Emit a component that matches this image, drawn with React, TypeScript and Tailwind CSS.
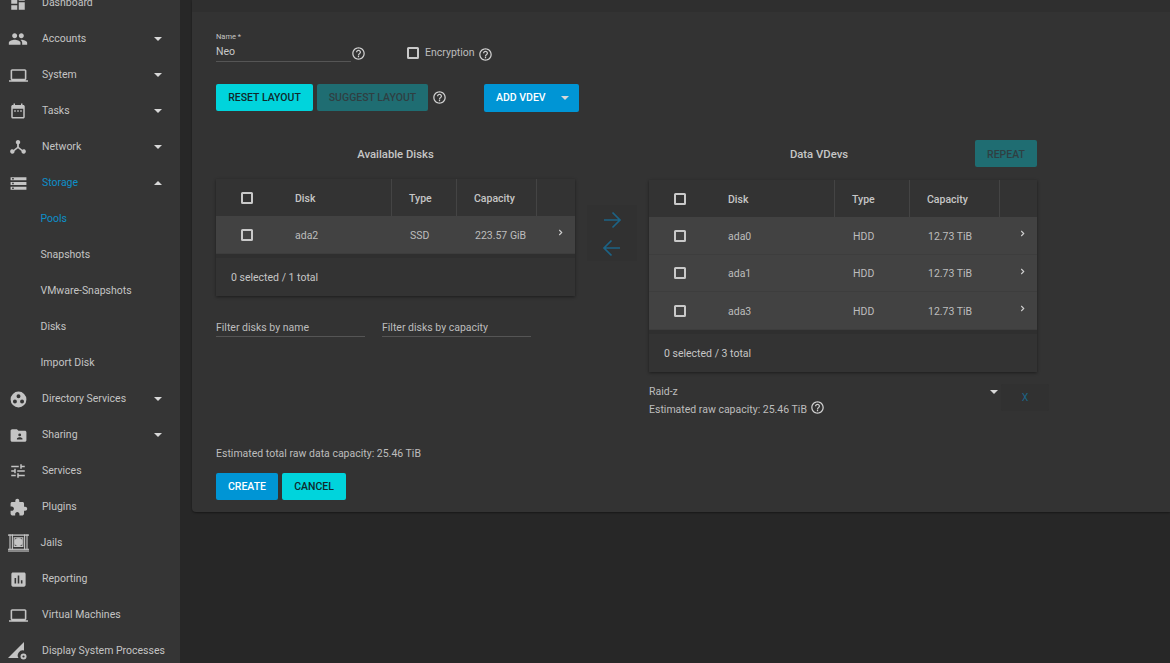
import React from "react";

const P = {
  dashboard: "M3 13h8V3H3v10zm0 8h8v-6H3v6zm10 0h8V11h-8v10zm0-18v6h8V3h-8z",
  people: "M16 11c1.66 0 2.99-1.34 2.99-3S17.66 5 16 5c-1.66 0-3 1.34-3 3s1.34 3 3 3zm-8 0c1.66 0 2.99-1.34 2.99-3S9.66 5 8 5C6.34 5 5 6.34 5 8s1.34 3 3 3zm0 2c-2.33 0-7 1.17-7 3.5V19h14v-2.5c0-2.33-4.67-3.5-7-3.5zm8 0c-.29 0-.62.02-.97.05 1.16.84 1.97 1.97 1.97 3.45V19h6v-2.5c0-2.33-4.67-3.5-7-3.5z",
  laptop: "M20 18c1.1 0 1.99-.9 1.99-2L22 6c0-1.1-.9-2-2-2H4c-1.1 0-2 .9-2 2v10c0 1.1.9 2 2 2H0v2h24v-2h-4zM4 6h16v10H4V6z",
  calendar: "M19 4h-1V2h-2v2H8V2H6v2H5c-1.11 0-1.99.9-1.99 2L3 20a2 2 0 0 0 2 2h14c1.1 0 2-.9 2-2V6c0-1.1-.9-2-2-2zm0 16H5V9h14v11zM7 11h2v2H7zm4 0h2v2h-2zm4 0h2v2h-2z",
  network: "M12 2.500a3 3 0 0 1 1.200 5.750V12l4.600 3.500a3 3 0 1 1-1.200 1.700L12 13.700l-4.600 3.500a3 3 0 1 1-1.200-1.700l4.600-3.500V8.250A3 3 0 0 1 12 2.500z",
  storage: "M2 20h20v-4H2v4zm2-3h2v2H4v-2zM2 4v4h20V4H2zm4 3H4V5h2v2zm-4 7h20v-4H2v4zm2-3h2v2H4v-2z",
  circles: "M12 2a10 10 0 1 0 0 20 10 10 0 0 0 0-20zm0 3.500a2.500 2.500 0 1 1 0 5 2.500 2.500 0 0 1 0-5zM7.500 12a2.500 2.500 0 1 1 0 5 2.500 2.500 0 0 1 0-5zm9 0a2.500 2.500 0 1 1 0 5 2.500 2.500 0 0 1 0-5z",
  folder: "M20 6h-8l-2-2H4c-1.100 0-1.990.900-1.990 2L2 18c0 1.100.900 2 2 2h16c1.100 0 2-.900 2-2V8c0-1.100-.900-2-2-2zm-6.500 3.500a1.800 1.800 0 1 1 0 3.600 1.800 1.800 0 0 1 0-3.600zM17 17h-7v-1c0-1.200 2.300-1.900 3.500-1.900S17 14.800 17 16v1z",
  tune: "M3 17v2h6v-2H3zM3 5v2h10V5H3zm10 16v-2h8v-2h-8v-2h-2v6h2zM7 9v2H3v2h4v2h2V9H7zm14 4v-2H11v2h10zm-6-4h2V7h4V5h-4V3h-2v6z",
  extension: "M20.5 11H19V7c0-1.1-.9-2-2-2h-4V3.5C13 2.12 11.88 1 10.5 1S8 2.12 8 3.5V5H4c-1.1 0-1.99.9-1.99 2v3.8H3.5c1.49 0 2.7 1.21 2.7 2.7s-1.21 2.7-2.7 2.7H2V20c0 1.1.9 2 2 2h3.8v-1.5c0-1.49 1.21-2.7 2.7-2.7 1.49 0 2.7 1.21 2.7 2.7V22H17c1.1 0 2-.9 2-2v-4h1.5c1.38 0 2.5-1.12 2.5-2.5S21.88 11 20.5 11z",
  report: "M19 3H5c-1.1 0-2 .9-2 2v14c0 1.1.9 2 2 2h14c1.1 0 2-.9 2-2V5c0-1.1-.9-2-2-2zM9 17H7v-7h2v7zm4 0h-2V7h2v10zm4 0h-2v-4h2v4z",
  help: "M11 18h2v-2h-2v2zm1-16C6.48 2 2 6.48 2 12s4.48 10 10 10 10-4.48 10-10S17.52 2 12 2zm0 18c-4.41 0-8-3.59-8-8s3.59-8 8-8 8 3.59 8 8-3.59 8-8 8zm0-14c-2.21 0-4 1.79-4 4h2c0-1.1.9-2 2-2s2 .9 2 2c0 2-3 1.75-3 5h2c0-2.25 3-2.5 3-5 0-2.21-1.79-4-4-4z",
};

function Ic({ d, cls }: { d: string; cls: string }) {
  return (
    <svg viewBox="0 0 24 24" fill="currentColor" fillRule="evenodd" className={cls}>
      <path d={d} />
    </svg>
  );
}

function Jails() {
  return (
    <svg viewBox="0 0 22 18" className="w-[21px] h-[18px]" fill="#c4c4c4">
      <rect x="0" y="0" width="22" height="1.4" />
      <rect x="0" y="15" width="22" height="1.2" />
      <rect x="0" y="16.800" width="22" height="1.2" />
      <rect x="1.500" y="0" width="1.200" height="16" />
      <rect x="4" y="0" width="1.200" height="16" />
      <rect x="16.800" y="0" width="1.200" height="16" />
      <rect x="19.300" y="0" width="1.200" height="16" />
      <circle cx="11" cy="8" r="4.300" />
      <path d="M6.500 3.500 L15.500 3.500 L15.500 12.500 L6.500 12.500 Z" fill="none" stroke="#c4c4c4" strokeWidth="1.200" />
    </svg>
  );
}

function Procs() {
  return (
    <svg viewBox="0 0 20 20" className="w-[20px] h-[20px]" fill="#c4c4c4">
      <path d="M0 17 L16 1 L16 9.500 A5 5 0 0 0 10.500 17 Z" />
      <circle cx="15.500" cy="15.500" r="3" />
      <circle cx="15.500" cy="15.500" r="1.100" fill="#353535" />
    </svg>
  );
}

function Caret({ up }: { up?: boolean }) {
  return (
    <span
      className={
        up
          ? "w-0 h-0 border-x-[4px] border-x-transparent border-b-[4px] border-b-[#d8d8d8]"
          : "w-0 h-0 border-x-[4px] border-x-transparent border-t-[4px] border-t-[#d8d8d8]"
      }
    />
  );
}

const NAV: { label: string; icon?: React.ReactNode; caret?: "up" | "down"; sub?: boolean; active?: boolean }[] = [
  { label: "Dashboard", icon: <Ic d={P.dashboard} cls="w-[18px] h-[18px]" /> },
  { label: "Accounts", icon: <Ic d={P.people} cls="w-[20px] h-[20px]" />, caret: "down" },
  { label: "System", icon: <Ic d={P.laptop} cls="w-[19px] h-[19px]" />, caret: "down" },
  { label: "Tasks", icon: <Ic d={P.calendar} cls="w-[18px] h-[18px]" />, caret: "down" },
  { label: "Network", icon: <Ic d={P.network} cls="w-[18px] h-[18px]" />, caret: "down" },
  { label: "Storage", icon: <Ic d={P.storage} cls="w-[19px] h-[19px]" />, caret: "up", active: true },
  { label: "Pools", sub: true, active: true },
  { label: "Snapshots", sub: true },
  { label: "VMware-Snapshots", sub: true },
  { label: "Disks", sub: true },
  { label: "Import Disk", sub: true },
  { label: "Directory Services", icon: <Ic d={P.circles} cls="w-[19px] h-[19px]" />, caret: "down" },
  { label: "Sharing", icon: <Ic d={P.folder} cls="w-[19px] h-[19px]" />, caret: "down" },
  { label: "Services", icon: <Ic d={P.tune} cls="w-[18px] h-[18px]" /> },
  { label: "Plugins", icon: <Ic d={P.extension} cls="w-[19px] h-[19px]" /> },
  { label: "Jails", icon: <Jails /> },
  { label: "Reporting", icon: <Ic d={P.report} cls="w-[19px] h-[19px]" /> },
  { label: "Virtual Machines", icon: <Ic d={P.laptop} cls="w-[19px] h-[19px]" /> },
  { label: "Display System Processes", icon: <Procs /> },
];

function Sidebar() {
  return (
    <nav className="w-[180px] shrink-0 bg-[#353535] -mt-[15px] text-[10.500px]">
      {NAV.map((n) => (
        <div key={n.label} className="h-9 flex items-center relative">
          {n.sub ? (
            <span className={n.active ? "pl-[40.500px] text-[#0d8fc9]" : "pl-[40.500px] text-[#c4c4c4]"}>{n.label}</span>
          ) : (
            <>
              <span className="w-[36px] flex justify-center text-[#c4c4c4] shrink-0">{n.icon}</span>
              <span className={n.active ? "ml-[6px] text-[#0d8fc9]" : n.label === "Jails" ? "ml-[4.500px] text-[#c4c4c4]" : "ml-[6px] text-[#c4c4c4]"}>
                {n.label}
              </span>
            </>
          )}
          {n.caret && (
            <span className="absolute left-[154px] top-1/2 -translate-y-1/2 flex">
              <Caret up={n.caret === "up"} />
            </span>
          )}
        </div>
      ))}
    </nav>
  );
}

function Help({ cls = "" }: { cls?: string }) {
  return <Ic d={P.help} cls={"w-[15px] h-[15px] text-[#d0d0d0] shrink-0 " + cls} />;
}

function Check() {
  return <span className="block w-3 h-3 border-2 border-[#c9c9c9] rounded-[1.500px] box-border" />;
}

function Chevron() {
  return (
    <svg viewBox="0 0 6 8" className="w-[5px] h-[7px]" fill="none" stroke="#d0d0d0" strokeWidth="1.300">
      <path d="M1.500 1 L4.500 4 L1.500 7" />
    </svg>
  );
}

type Cols = { c: string; d: string; t: string; cap: string; a: string };

function DiskTable({ rows, footer, cols, rowH }: { rows: { name: string; type: string; cap: string }[]; footer: string; cols: Cols; rowH: string[] }) {
  return (
    <div className="shadow-[0_1px_3px_rgba(0,0,0,0.45)] text-[10.500px]">
      <div className="h-[37px] flex items-center text-[#c6c6c6] font-medium bg-[#333333]">
        <div className={cols.c + " flex justify-center"}><Check /></div>
        <div className={cols.d + " h-full flex items-center border-r border-[#444444] pt-[2px]"}>Disk</div>
        <div className={cols.t + " h-full flex items-center border-r border-[#444444] pl-[17px] pt-[2px]"}>Type</div>
        <div className={cols.cap + " h-full flex items-center border-r border-[#444444] pl-[17px] pt-[2px]"}>Capacity</div>
      </div>
      {rows.map((r, i) => (
        <div key={r.name} className={rowH[i] + " flex items-center bg-[#424242] text-[#bdbdbd] relative border-b border-[#3d3d3d]"}>
          <div className={cols.c + " flex justify-center"}><Check /></div>
          <div className={cols.d + " pl-[1px] pt-[2px]"}>{r.name}</div>
          <div className={cols.t + " pl-[18px] pt-[2px]"}>{r.type}</div>
          <div className={cols.cap + " pl-[18px] pt-[2px]"}>{r.cap}</div>
          <div className={cols.a + " flex -mt-1"}><Chevron /></div>
        </div>
      ))}
      <div className="h-1 bg-[#2f2f2f]" />
      <div className="h-[38px] flex items-center pl-[15px] pt-[1px] text-[#c6c6c6]">{footer}</div>
    </div>
  );
}

function Filter({ label }: { label: string }) {
  return <div className="w-[149px] h-[21px] border-b border-[#555555] text-[10.500px] text-[#bdbdbd] leading-[23px]">{label}</div>;
}

export default function App() {
  return (
    <div className="h-[663px] w-[1170px] overflow-hidden flex bg-[#272727] font-['Roboto',sans-serif]">
      <Sidebar />
      <main className="flex-1 pl-3">
        <div className="h-[512px] bg-[#333333] rounded-bl-[4px] shadow-[0_1px_2px_rgba(0,0,0,0.4)]">
          <div className="h-3 bg-[#2f2f2f]" />
          <div className="pl-6 pt-[20px]">
            <div className="flex items-start h-[30px]">
              <div className="w-[135px] h-[30px] border-b border-[#555555]">
                <div className="text-[7.500px] leading-[9px] text-[#c4c4c4]">Name *</div>
                <div className="text-[10.500px] leading-[15px] mt-[3px] text-[#c8c8c8]">Neo</div>
              </div>
              <Help cls="mt-[14px]" />
              <div className="pl-[41px] mt-[15px]"><Check /></div>
              <span className="ml-[6px] mt-[14px] text-[10.500px] leading-[14px] text-[#bdbdbd]">Encryption</span>
              <Help cls="ml-[3px] mt-[15px]" />
            </div>
            <div className="flex items-start mt-[22px]">
              <div className="w-[97px] h-[27px] pt-[1px] bg-[#00d4dc] rounded-[2px] flex items-center justify-center text-[#10292b] text-[10.500px] font-medium">RESET LAYOUT</div>
              <div className="ml-1 w-[111px] h-[27px] pt-[1px] bg-[#1f6d72] rounded-[2px] flex items-center justify-center text-[#2f3f42] text-[10.500px] font-medium">SUGGEST LAYOUT</div>
              <Help cls="ml-1 mt-[6px]" />
              <div className="ml-[37px] w-[95px] h-[28px] bg-[#0095d5] rounded-[2px] flex items-center text-white text-[10.500px] font-medium">
                <span className="ml-3">ADD VDEV</span>
                <span className="ml-[15px] flex"><Caret /></span>
              </div>
            </div>
            <div className="flex mt-[28px]">
              <div className="w-[359px] shrink-0">
                <div className="h-[27px] pt-[4px] mb-[12px] flex items-center justify-center text-[11.300px] font-medium text-[#c6c6c6]">Available Disks</div>
                <DiskTable
                  footer="0 selected / 1 total"
                  cols={{ c: "w-[61px]", d: "w-[115px] pl-[18px]", t: "w-[65px]", cap: "w-[80px]", a: "ml-[21px]" }}
                  rowH={["h-[38px]"]}
                  rows={[{ name: "ada2", type: "SSD", cap: "223.57 GiB" }]}
                />
                <div className="flex gap-[17px] mt-[20px]">
                  <Filter label="Filter disks by name" />
                  <Filter label="Filter disks by capacity" />
                </div>
                <div className="mt-[110px] text-[10.500px] leading-[14px] text-[#bdbdbd]">Estimated total raw data capacity: 25.46 TiB</div>
                <div className="flex gap-1 mt-[12px]">
                  <div className="w-[62px] h-[27px] pt-[1px] bg-[#0095d5] rounded-[2px] flex items-center justify-center text-white text-[10.500px] font-medium">CREATE</div>
                  <div className="w-[64px] h-[27px] pt-[1px] bg-[#00d4dc] rounded-[2px] flex items-center justify-center text-[#10292b] text-[10.500px] font-medium">CANCEL</div>
                </div>
              </div>
              <div className="w-[74px] shrink-0 flex justify-center pt-[65px]">
                <div className="w-[50px] h-[56px] pt-[1px] bg-[#313131] flex flex-col items-center justify-center gap-[8px] text-[#1c6385]">
                  <svg viewBox="0 0 20 20" className="w-[20px] h-[20px]" fill="none" stroke="currentColor" strokeWidth="1.700"><path d="M2 10 H18 M10.500 2.500 L18 10 L10.500 17.500" /></svg>
                  <svg viewBox="0 0 20 20" className="w-[20px] h-[20px]" fill="none" stroke="currentColor" strokeWidth="1.700"><path d="M18 10 H2 M9.500 2.500 L2 10 L9.500 17.500" /></svg>
                </div>
              </div>
              <div className="w-[388px] shrink-0 relative">
                <div className="h-[27px] pt-[4px] mb-[12px] flex items-center justify-center pr-[48px] text-[11.300px] font-medium text-[#c6c6c6]">Data VDevs</div>
                <div className="absolute right-0 top-0 w-[62px] h-[27px] pt-[2px] bg-[#1f6d72] rounded-[2px] flex items-center justify-center text-[#2f3f42] text-[10.500px] font-medium">REPEAT</div>
                <div className="pt-[1px]">
                  <DiskTable
                    footer="0 selected / 3 total"
                    cols={{ c: "w-[61px]", d: "w-[125px] pl-[18px]", t: "w-[75px]", cap: "w-[90px]", a: "ml-[20px]" }}
                    rowH={["h-[38px]", "h-[37px]", "h-[38px]"]}
                    rows={[
                      { name: "ada0", type: "HDD", cap: "12.73 TiB" },
                      { name: "ada1", type: "HDD", cap: "12.73 TiB" },
                      { name: "ada3", type: "HDD", cap: "12.73 TiB" },
                    ]}
                  />
                </div>
                <div className="relative mt-[13px] text-[10.500px] leading-[14px] text-[#bdbdbd]">
                  <div className="flex items-center pr-[39px] justify-between">
                    <span>Raid-z</span>
                    <Caret />
                  </div>
                  <div className="flex items-start mt-[4px]">
                    <span>Estimated raw capacity: 25.46 TiB</span>
                    <Help cls="ml-[3px] -mt-[3px]" />
                  </div>
                  <div className="absolute left-[352px] -top-[1px] w-[48px] h-[27px] bg-[#313131] rounded-[2px] flex items-center justify-center text-[#1c6385] text-[10.500px]">X</div>
                </div>
              </div>
            </div>
          </div>
        </div>
      </main>
    </div>
  );
}
